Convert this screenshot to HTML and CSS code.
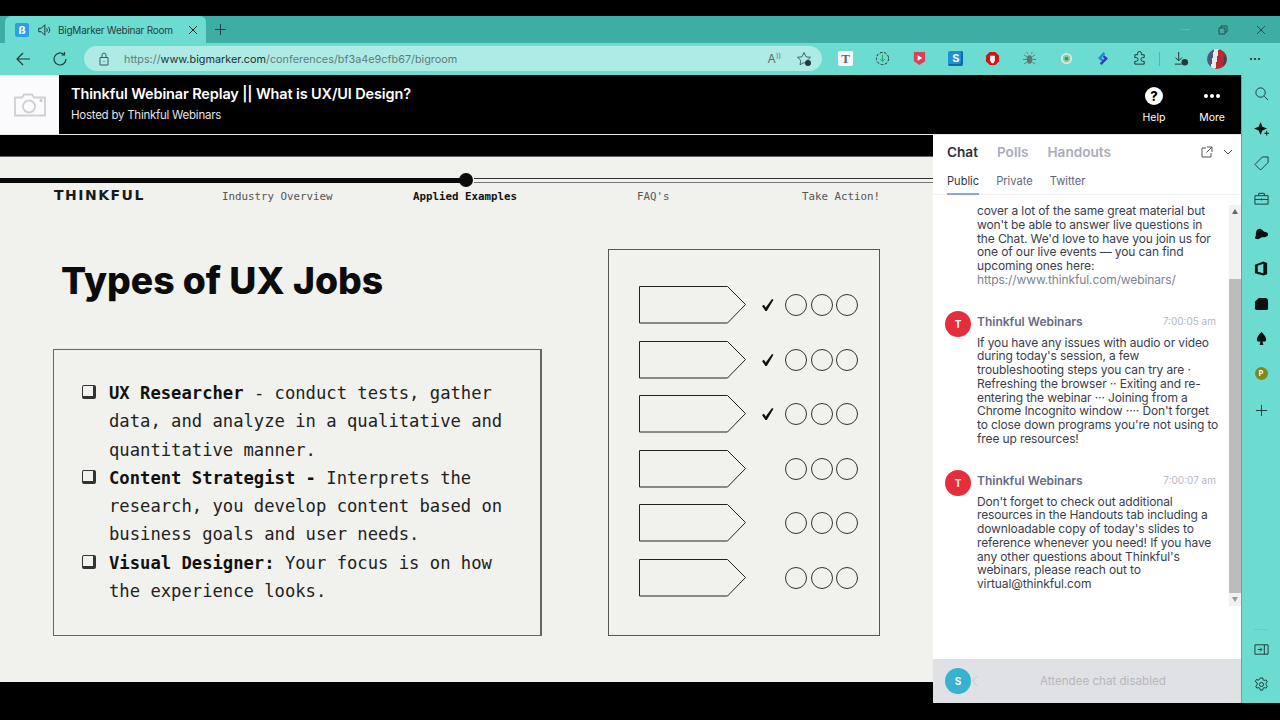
FILE: index.html
```html
<!DOCTYPE html>
<html lang="en">
<head>
  <meta charset="UTF-8" />
  <title>BigMarker Webinar Room</title>
  <link rel="stylesheet" href="styles.css">
</head>
<body>
  <div class="browser">
    <div class="tabstrip">
      <div class="tab">
        <span class="favicon">ß</span>
        <svg class="ic14" viewBox="0 0 16 16"><path d="M2 6h3l4-4v12l-4-4H2zM11 6c1 1 1 3 0 4M13 4.500c2 2 2 5 0 7"/></svg>
        <span class="tab-title">BigMarker Webinar Room</span>
        <svg class="ic10" viewBox="0 0 10 10"><path d="M1 1l8 8M9 1l-8 8"/></svg>
      </div>
      <svg class="newtab" viewBox="0 0 12 12"><path d="M6 0v12M0 6h12"/></svg>
      <div class="winctl">
        <span class="minimize"></span>
        <svg class="ic10" viewBox="0 0 10 10"><path d="M1 3h6v6H1zM3 3V1h6v6H7"/></svg>
        <svg class="ic10" viewBox="0 0 10 10"><path d="M1 1l8 8M9 1l-8 8"/></svg>
      </div>
    </div>
    <div class="toolbar">
      <svg class="nav-ic" viewBox="0 0 16 16"><path d="M15 8H2M8 2L2 8l6 6"/></svg>
      <svg class="nav-ic reload" viewBox="0 0 16 16"><path d="M14 8a6 6 0 1 1-2-4.500M12.500 1v3h-3"/></svg>
      <div class="addressbar">
        <svg class="ic14 lock" viewBox="0 0 14 14"><path d="M3 5.500h8V13H3zM5 5.500V3a2 2 0 0 1 4 0v2.500M7 9v1"/></svg>
        <span class="url">https://<b>www.bigmarker.com</b>/conferences/bf3a4e9cfb67/bigroom</span>
        <span class="addr-end">
          <span class="read-aloud">A<small>))</small></span>
          <svg class="ic16" viewBox="0 0 16 16"><path d="M8 1.500l2 4.300 4.500.5-3.300 3 .8 4.500L8 11.500l-4 2.300.8-4.500-3.300-3 4.500-.5z"/><circle class="fill-dark" cx="12" cy="12" r="3"/></svg>
        </span>
      </div>
      <div class="extensions">
        <span class="ext ext-t">T</span>
        <svg class="ext-svg" viewBox="0 0 16 16"><circle cx="8" cy="8" r="6.500" stroke-dasharray="3 1.500"/><path class="green" d="M8 4v7M5.500 8.500L8 11l2.500-2.500"/></svg>
        <svg class="ext-svg" viewBox="0 0 16 16"><path class="pocket" d="M2 1h12v10l-6 4-6-4z"/><path class="white-fill" d="M6 4.500l5 3-5 3z"/></svg>
        <span class="ext ext-s">S</span>
        <svg class="ext-svg" viewBox="0 0 16 16"><path class="stop" d="M5 1h6l4 4v6l-4 4H5l-4-4V5z"/><path class="white-fill" d="M5.500 5h5v5l-1.500 3H7l-1.500-3z"/></svg>
        <svg class="ext-svg" viewBox="0 0 16 16"><ellipse class="bug" cx="8" cy="9" rx="3" ry="4.500"/><path class="bug-legs" d="M5 6L2 4M5 9H1M5 12l-3 2M11 6l3-2M11 9h4M11 12l3 2M6 3L5 1M10 3l1-2"/></svg>
        <svg class="ext-svg" viewBox="0 0 16 16"><circle class="ring" cx="8" cy="8" r="5"/><circle class="ring-dot" cx="8" cy="8" r="2"/></svg>
        <svg class="ext-svg" viewBox="0 0 16 16"><path class="blue-stroke" d="M10 2L5 7.500l4 3"/><path class="purple-stroke" d="M9 5.500l3 2.500-6 6"/></svg>
        <svg class="ext-svg" viewBox="0 0 16 16"><path d="M6 2.500a2 2 0 0 1 4 0V4h3v3h-1.500a2 2 0 0 0 0 4H13v3H3v-3h1.500a2 2 0 0 0 0-4H3V4h3z"/></svg>
        <span class="tool-sep"></span>
        <svg class="ext-svg" viewBox="0 0 16 16"><path d="M5 1v9M1.500 7L5 10.500 8.500 7M1 14h7"/><circle class="fill-dark" cx="11.500" cy="12" r="3.500"/></svg>
        <span class="avatar-profile"></span>
        <span class="dots-dark">···</span>
      </div>
    </div>
  </div>

  <div class="app">
    <div class="app-main">
      <header class="topbar">
        <div class="logo-box">
          <svg class="camera" viewBox="0 0 32 24"><path d="M1 5h7l2-3h8l2 3h11v18H1z"/><circle cx="15" cy="14" r="6"/><circle cx="27" cy="8" r=".8"/></svg>
        </div>
        <div class="title-block">
          <div class="webinar-title">Thinkful Webinar Replay || What is UX/UI Design?</div>
          <div class="hosted">Hosted by Thinkful Webinars</div>
        </div>
        <div class="top-actions">
          <div class="top-action">
            <span class="help-ic">?</span>
            <span>Help</span>
          </div>
          <div class="top-action">
            <span class="more-ic"><i></i><i></i><i></i></span>
            <span>More</span>
          </div>
        </div>
      </header>

      <div class="room">
        <main class="stage">
          <section class="slide">
            <div class="progress">
              <span class="progress-done"></span>
              <span class="progress-dot"></span>
              <span class="progress-left"></span>
            </div>
            <nav class="slide-nav">
              <span class="brand">THINKFUL</span>
              <span class="nav-one">Industry Overview</span>
              <span class="nav-two">Applied Examples</span>
              <span class="nav-three">FAQ's</span>
              <span class="nav-four">Take Action!</span>
            </nav>
            <div class="slide-body">
              <div class="slide-left">
                <h1>Types of UX Jobs</h1>
                <ul class="jobs">
                  <li><b>UX Researcher</b> - conduct tests, gather<br>data, and analyze in a qualitative and<br>quantitative manner.</li>
                  <li><b>Content Strategist -</b> Interprets the<br>research, you develop content based on<br>business goals and user needs.</li>
                  <li><b>Visual Designer:</b> Your focus is on how<br>the experience looks.</li>
                </ul>
              </div>
              <div class="diagram">
                <div class="diagram-row">
                  <svg class="arrow" viewBox="0 0 108 38"><path d="M.5.500h88l18 18-18 18.500H.500z"/></svg>
                  <span class="check"><svg viewBox="0 0 12 12"><path d="M0 7l2-1.300 1.700 2.800L10 0l1.500.8L4.800 12H3.400z"/></svg></span>
                  <span class="dots"><i></i><i></i><i></i></span>
                </div>
                <div class="diagram-row">
                  <svg class="arrow" viewBox="0 0 108 38"><path d="M.5.500h88l18 18-18 18.500H.500z"/></svg>
                  <span class="check"><svg viewBox="0 0 12 12"><path d="M0 7l2-1.300 1.700 2.800L10 0l1.500.8L4.800 12H3.400z"/></svg></span>
                  <span class="dots"><i></i><i></i><i></i></span>
                </div>
                <div class="diagram-row">
                  <svg class="arrow" viewBox="0 0 108 38"><path d="M.5.500h88l18 18-18 18.500H.500z"/></svg>
                  <span class="check"><svg viewBox="0 0 12 12"><path d="M0 7l2-1.300 1.700 2.800L10 0l1.500.8L4.800 12H3.400z"/></svg></span>
                  <span class="dots"><i></i><i></i><i></i></span>
                </div>
                <div class="diagram-row">
                  <svg class="arrow" viewBox="0 0 108 38"><path d="M.5.500h88l18 18-18 18.500H.500z"/></svg>
                  <span class="check"></span>
                  <span class="dots"><i></i><i></i><i></i></span>
                </div>
                <div class="diagram-row">
                  <svg class="arrow" viewBox="0 0 108 38"><path d="M.5.500h88l18 18-18 18.500H.500z"/></svg>
                  <span class="check"></span>
                  <span class="dots"><i></i><i></i><i></i></span>
                </div>
                <div class="diagram-row">
                  <svg class="arrow" viewBox="0 0 108 38"><path d="M.5.500h88l18 18-18 18.500H.500z"/></svg>
                  <span class="check"></span>
                  <span class="dots"><i></i><i></i><i></i></span>
                </div>
              </div>
            </div>
          </section>
        </main>

        <aside class="chat">
          <div class="chat-tabs">
            <span class="chat-tab active">Chat</span>
            <span class="chat-tab">Polls</span>
            <span class="chat-tab">Handouts</span>
            <span class="chat-tools">
              <svg class="ic12" viewBox="0 0 12 12"><path d="M5 2H1v9h9V7M6 1h5v5M11 1L5.500 6.500"/></svg>
              <svg class="ic12" viewBox="0 0 12 12"><path d="M2 4l4 4 4-4"/></svg>
            </span>
          </div>
          <div class="chat-subtabs">
            <span class="subtab active">Public</span>
            <span class="subtab">Private</span>
            <span class="subtab">Twitter</span>
          </div>
          <div class="chat-scroll">
            <div class="messages">
              <div class="msg msg-cut">
                <p>cover a lot of the same great material but<br>won't be able to answer live questions in<br>the Chat. We'd love to have you join us for<br>one of our live events — you can find<br>upcoming ones here:<br><a>https://www.thinkful.com/webinars/</a></p>
              </div>
              <div class="msg">
                <span class="avatar">T</span>
                <div class="msg-body">
                  <div class="msg-head"><b>Thinkful Webinars</b><time>7:00:05 am</time></div>
                  <p>If you have any issues with audio or video<br>during today's session, a few<br>troubleshooting steps you can try are ·<br>Refreshing the browser ·· Exiting and re-<br>entering the webinar ··· Joining from a<br>Chrome Incognito window ···· Don't forget<br>to close down programs you're not using to<br>free up resources!</p>
                </div>
              </div>
              <div class="msg">
                <span class="avatar">T</span>
                <div class="msg-body">
                  <div class="msg-head"><b>Thinkful Webinars</b><time>7:00:07 am</time></div>
                  <p>Don't forget to check out additional<br>resources in the Handouts tab including a<br>downloadable copy of today's slides to<br>reference whenever you need! If you have<br>any other questions about Thinkful's<br>webinars, please reach out to<br>virtual@thinkful.com</p>
                </div>
              </div>
            </div>
            <div class="scrollbar">
              <span class="sb-arrow up"></span>
              <span class="sb-space"></span>
              <span class="sb-thumb"></span>
              <span class="sb-arrow down"></span>
            </div>
          </div>
          <div class="chat-input">
            <span class="avatar avatar-me">S</span>
            <svg class="chev-left" viewBox="0 0 6 12"><path d="M5 1L1 6l4 5"/></svg>
            <span class="disabled-note">Attendee chat disabled</span>
          </div>
        </aside>
      </div>
    </div>

    <aside class="sidebar">
      <svg class="side-ic" viewBox="0 0 16 16"><circle cx="7" cy="7" r="5"/><path d="M11 11l4 4"/></svg>
      <svg class="side-ic solid" viewBox="0 0 16 16"><path d="M7 1l2 5 5 2-5 2-2 5-2-5-5-2 5-2zM13 10.500h1v2h2v1h-2v2h-1v-2h-2v-1h2z"/></svg>
      <svg class="side-ic" viewBox="0 0 16 16"><path d="M1 9l8-8h6v6l-8 8zM11.500 4.500h.01"/></svg>
      <svg class="side-ic" viewBox="0 0 16 16"><path d="M1 5h14v9H1zM5 5V2.500h6V5M1 9h14M8 8v2"/></svg>
      <svg class="side-ic solid" viewBox="0 0 16 16"><path d="M1 12c1-1 1-2 1-3 0-3 1-6 4-6 2 0 3 2 5 3 2 0 4 1 4 3s-3 3-6 3c-2 0-3 2-5 2-1 0-3 0-3-2z"/></svg>
      <svg class="side-ic solid" viewBox="0 0 16 16"><path d="M1 4l9-3.500 4 1.500v12l-4 1.500-9-2.500zM4 5v6.500l6 1.500V3z"/></svg>
      <svg class="side-ic solid" viewBox="0 0 16 16"><path d="M5 2h8l2 2v10l-1 1H3l-2-1V6z"/></svg>
      <svg class="side-ic solid" viewBox="0 0 16 16"><path d="M8 1c2 2 5 5 5 8 0 2-2 3-4 2l1 4H6l1-4c-2 1-4 0-4-2 0-3 3-6 5-8z"/></svg>
      <span class="side-p">P</span>
      <svg class="side-ic side-plus" viewBox="0 0 16 16"><path d="M8 2v12M2 8h12"/></svg>
      <span class="side-space"></span>
      <span class="side-rule"></span>
      <svg class="side-ic" viewBox="0 0 16 16"><path d="M1 3h14v10H1zM11 3v10M4 8h4M6.500 6L8.500 8l-2 2"/></svg>
      <svg class="side-ic gear" viewBox="0 0 16 16"><circle cx="8" cy="8" r="2.200"/><path d="M6.700 1h2.600l.4 2 1.200.7 2-.6 1.300 2.200-1.500 1.400v1.600l1.500 1.400-1.300 2.200-2-.6-1.200.7-.4 2H6.700l-.4-2-1.200-.7-2 .6-1.300-2.200 1.500-1.400V6.300L1.300 4.900l1.300-2.200 2 .6 1.200-.7z"/></svg>
    </aside>
  </div>
</body>
</html>
```

FILE: styles.css
```css
* {
  box-sizing: border-box;
}

html, body {
  margin: 0;
  height: 720px;
  overflow: hidden;
  background: #000;
  font-family: Inter, "Noto Sans", sans-serif;
}

svg {
  display: block;
  fill: none;
  stroke: #222;
  stroke-width: 1;
  flex: none;
}

p {
  margin: 0;
}

.ic10 { width: 10px; height: 10px; }
.ic12 { width: 12px; height: 12px; stroke: #555; }
.ic14 { width: 14px; height: 14px; }
.ic16 { width: 16px; height: 16px; }

/* browser chrome */
.browser {
  margin-top: 16px;
}

.tabstrip {
  height: 27px;
  background: #3eada4;
  display: flex;
  align-items: flex-end;
  padding-left: 5px;
}

.tab {
  width: 201px;
  height: 27px;
  background: #6cdcd1;
  border-radius: 6px 6px 0 0;
  display: flex;
  align-items: center;
  padding: 0 8px 0 10px;
  gap: 7.500px;
}

.favicon {
  width: 14px;
  height: 14px;
  background: #2b9fe6;
  color: #fff;
  font-size: 11px;
  font-weight: 700;
  line-height: 14px;
  text-align: center;
  border-radius: 2px;
  flex: none;
}

.tab-title {
  font-size: 10px;
  letter-spacing: -.25px;
  color: #24403d;
  white-space: nowrap;
  flex: 1;
}

.newtab {
  width: 11px;
  height: 11px;
  margin: 0 0 8px 9px;
  stroke: #234;
}

.winctl {
  margin-left: auto;
  height: 27px;
  display: flex;
  align-items: center;
  gap: 28px;
  padding-right: 14px;
}

.winctl svg {
  stroke: #27504c;
}

.minimize {
  width: 10px;
  height: 1px;
  background: #63b9b1;
}

.toolbar {
  height: 32px;
  background: #6cdcd1;
  display: flex;
  align-items: center;
  padding: 0 0 1px 15px;
}

.nav-ic {
  width: 16px;
  height: 16px;
  stroke: #1f3b38;
  stroke-width: 1.200;
}

.reload {
  margin-left: 21px;
}

.addressbar {
  width: 738px;
  height: 25px;
  margin-left: 16px;
  border-radius: 13px;
  background: #aeebe4;
  display: flex;
  align-items: center;
  padding: 0 10px 0 13px;
}

.lock {
  stroke: #3d5f5b;
}

.url {
  margin-left: 13px;
  font-size: 10.850px;
  color: #5d7d7a;
  white-space: nowrap;
}

.url b {
  font-weight: 400;
  color: #1b2f2d;
}

.addr-end {
  margin-left: auto;
  display: flex;
  align-items: center;
  gap: 15px;
}

.addr-end svg {
  stroke: #446663;
}

.read-aloud {
  font-size: 12px;
  color: #56706e;
}

.read-aloud small {
  font-size: 7px;
  vertical-align: top;
}

.fill-dark {
  fill: #253a38;
  stroke: none;
}

.extensions {
  display: flex;
  align-items: center;
  margin-left: 16px;
  gap: 21.750px;
}

.ext-svg {
  width: 15px;
  height: 15px;
  stroke: #1e2e2c;
}

.ext {
  width: 15px;
  height: 15px;
  font-size: 11px;
  font-weight: 700;
  line-height: 15px;
  text-align: center;
  border-radius: 2px;
}

.ext-t {
  background: #f4f8f8;
  color: #666;
  font-family: "Liberation Serif", serif;
  font-size: 13px;
}

.ext-s {
  background: #1f8fd6;
  color: #fff;
  box-shadow: inset -2px -2px 0 #1567a6;
}

.green { stroke: #2e9a55; }
.pocket { fill: #d9405a; stroke: none; }
.stop { fill: #d81010; stroke: none; }
.white-fill { fill: #fff; stroke: none; }
.bug { fill: #5d7775; stroke: none; }
.bug-legs { stroke: #5d7775; }
.ring { stroke: #d7ecdc; stroke-width: 2; fill: #8cc9a4; }
.ring-dot { fill: #3d9a67; stroke: none; }
.blue-stroke { stroke: #1f86e0; stroke-width: 2.500; }
.purple-stroke { stroke: #3a35c0; stroke-width: 2.500; }

.tool-sep {
  width: 1px;
  height: 14px;
  background: #57b3aa;
  margin: 0 -8px 0 -10px;
}

.avatar-profile {
  width: 20px;
  height: 20px;
  margin-left: -3px;
  border-radius: 50%;
  background: linear-gradient(100deg, #4b5a80 0 30%, #e8e8ee 30% 50%, #b42a35 50% 80%, #5a3a4a 80%);
}

.dots-dark {
  color: #20302e;
  font-size: 12px;
  font-weight: 700;
}

/* app frame */
.app {
  display: flex;
  height: 628px;
}

.app-main {
  width: 1241px;
  display: flex;
  flex-direction: column;
}

.topbar {
  height: 60px;
  background: #000;
  border-bottom: 1px solid #e6e6e6;
  display: flex;
  color: #fff;
}

.logo-box {
  width: 59px;
  height: 59px;
  background: #fbfbfe;
  display: flex;
  align-items: center;
  justify-content: center;
}

.camera {
  width: 32px;
  height: 25px;
  stroke: #cfd0d4;
  stroke-width: 1.800;
}

.title-block {
  margin-left: 12px;
  padding-top: 10px;
}

.webinar-title {
  font-size: 14.500px;
  font-weight: 600;
  line-height: 18px;
  letter-spacing: -.13px;
}

.hosted {
  margin-top: 5px;
  font-size: 11.500px;
  line-height: 15px;
  color: #e4e4e4;
  letter-spacing: -.25px;
}

.top-actions {
  margin-left: auto;
  display: flex;
}

.top-action {
  width: 58px;
  display: flex;
  flex-direction: column;
  align-items: center;
  padding-top: 12px;
  gap: 6px;
  font-size: 10.500px;
  line-height: 14px;
}

.help-ic {
  width: 18px;
  height: 18px;
  border-radius: 50%;
  background: #fff;
  color: #000;
  font-size: 13px;
  font-weight: 800;
  line-height: 18px;
  text-align: center;
}

.more-ic {
  height: 18px;
  display: flex;
  align-items: center;
  gap: 2px;
}

.more-ic i {
  width: 4px;
  height: 4px;
  border-radius: 50%;
  background: #fff;
}

.room {
  flex: 1;
  display: flex;
  min-height: 0;
}

/* slide */
.stage {
  width: 933px;
  background: #000;
  padding-top: 21px;
}

.slide {
  height: 526px;
  background: #f1f1ee;
  border-top: 1px solid #666;
  display: flex;
  flex-direction: column;
}

.progress {
  margin-top: 16px;
  height: 14px;
  display: flex;
  align-items: center;
}

.progress-done {
  width: 460px;
  height: 5px;
  background: #0a0a0a;
}

.progress-dot {
  width: 14px;
  height: 14px;
  border-radius: 50%;
  background: #0a0a0a;
  margin-left: -1px;
}

.progress-left {
  flex: 1;
  margin-left: 1px;
  height: 5px;
  border-top: 1px solid #333;
  border-bottom: 1px solid #777;
}

.slide-nav {
  display: grid;
  grid-template-columns: 168px 191px 224px 165px auto;
  padding-left: 54px;
  height: 26px;
  align-items: center;
  font-family: "DejaVu Sans Mono", monospace;
  font-size: 10.800px;
  color: #555;
  margin-top: -4px;
}

.brand {
  font-family: "DejaVu Sans", sans-serif;
  font-size: 14px;
  font-weight: 700;
  color: #1a1a1a;
  letter-spacing: 1.500px;
  transform: translateY(-1px);
}

.nav-two {
  color: #111;
  font-weight: 700;
}

.slide-body {
  display: flex;
  flex: 1;
  padding-left: 53px;
}

.slide-left {
  width: 489px;
  display: flex;
  flex-direction: column;
}

h1 {
  margin: 50px 0 0 8px;
  height: 90px;
  font-size: 37.300px;
  line-height: 44px;
  font-weight: 800;
  color: #0c0c0c;
}

.jobs {
  list-style: none;
  margin: 0;
  height: 287px;
  border: 1px solid #666;
  border-right-width: 2px;
  padding: 29px 0 0 55px;
  font-family: "DejaVu Sans Mono", monospace;
  font-size: 17.200px;
  line-height: 28.250px;
  color: #222;
  white-space: nowrap;
}

.jobs li {
  position: relative;
}

.jobs li::before {
  content: "";
  box-sizing: border-box;
  position: absolute;
  left: -27px;
  top: 6px;
  width: 14px;
  height: 14px;
  border: 1px solid #333;
  border-right-width: 3px;
  border-bottom-width: 3px;
  border-radius: 2px;
}

.jobs b {
  color: #111;
}

.diagram {
  width: 272px;
  height: 387px;
  margin: 40px 0 0 66px;
  border: 1px solid #555;
  padding: 36px 0 0 30px;
  display: flex;
  flex-direction: column;
  gap: 16.500px;
}

.diagram-row {
  display: flex;
  align-items: center;
  height: 38px;
}

.arrow {
  width: 108px;
  height: 38px;
  stroke: #222;
}

.check {
  width: 38px;
  display: flex;
  justify-content: center;
  padding-left: 3px;
}

.check svg {
  width: 12px;
  height: 12px;
  fill: #111;
  stroke: none;
}

.dots {
  display: flex;
  gap: 3.500px;
}

.dots i {
  width: 22px;
  height: 22px;
  border: 1px solid #333;
  border-radius: 50%;
}

/* chat panel */
.chat {
  width: 308px;
  background: #fff;
  display: flex;
  flex-direction: column;
}

.chat-tabs {
  height: 33px;
  display: flex;
  align-items: center;
  gap: 19px;
  padding: 0 7px 0 14px;
}

.chat-tab {
  font-size: 13.600px;
  font-weight: 600;
  color: #a9acba;
}

.chat-tab.active {
  color: #2d2f3e;
}

.chat-tools {
  margin-left: auto;
  display: flex;
  gap: 9px;
}

.chat-subtabs {
  height: 27px;
  display: flex;
  gap: 17px;
  padding: 1px 0 0 14px;
  border-bottom: 1px solid #f0f0f2;
  font-size: 11.100px;
}

.subtab {
  line-height: 24px;
  color: #5f6478;
}

.subtab.active {
  color: #33384c;
  border-bottom: 2px solid #8ea6d6;
  height: 26px;
}

.chat-scroll {
  margin-top: 10px;
  flex: 1;
  display: flex;
  align-items: flex-start;
}

.messages {
  width: 296px;
  padding: 0 13px 0 12px;
}

.msg {
  display: flex;
  gap: 6px;
  margin-bottom: 24px;
}

.msg-cut {
  margin-top: -1px;
  padding-left: 32px;
  margin-bottom: 24px;
}

.msg p {
  font-size: 12px;
  line-height: 13.750px;
  color: #3a3d4c;
  white-space: nowrap;
  letter-spacing: -.12px;
}

.msg a {
  color: #7d8390;
}

.avatar {
  width: 26px;
  height: 26px;
  border-radius: 50%;
  background: #e52d3c;
  color: #fff;
  font-size: 10px;
  font-weight: 700;
  line-height: 26px;
  text-align: center;
  flex: none;
}

.msg-body {
  flex: 1;
  min-width: 0;
}

.msg-head {
  display: flex;
  justify-content: space-between;
  align-items: center;
  height: 21px;
  margin-bottom: 4px;
}

.msg-head b {
  font-size: 12px;
  font-weight: 600;
  color: #666b84;
}

.msg-head time {
  font-size: 10px;
  color: #b5b7be;
}

.scrollbar {
  width: 12px;
  height: 401px;
  background: #f1f1f1;
  display: flex;
  flex-direction: column;
}

.sb-space {
  height: 62px;
}

.sb-thumb {
  height: 314px;
  background: #bcbcbc;
}

.sb-arrow {
  height: 12px;
  display: flex;
  justify-content: center;
  align-items: center;
}

.sb-arrow::before {
  content: "";
  border-left: 3.500px solid transparent;
  border-right: 3.500px solid transparent;
}

.sb-arrow.up::before {
  border-bottom: 5px solid #666;
}

.sb-arrow.down::before {
  border-top: 5px solid #999;
}

.chat-input {
  height: 44px;
  background: #e0e1e4;
  display: flex;
  align-items: center;
  padding-left: 12px;
}

.avatar-me {
  background: #36b3d1;
}

.chev-left {
  width: 6px;
  height: 12px;
  margin-left: 1px;
  stroke: #c9cbd0;
}

.disabled-note {
  margin-left: 62px;
  font-size: 11.600px;
  color: #b5b7bc;
}

/* right edge sidebar */
.sidebar {
  width: 39px;
  background: #6cdcd1;
  border-left: 1px solid #5fa8a2;
  display: flex;
  flex-direction: column;
  align-items: center;
  padding-top: 11px;
  gap: 20px;
}

.side-ic {
  width: 15px;
  height: 15px;
  stroke: #1d3533;
}

.side-ic.solid {
  fill: #071211;
  stroke: none;
}

.side-p {
  width: 13px;
  height: 13px;
  margin: 1px 0;
  border-radius: 50%;
  background: #7d8a1e;
  color: #fff;
  font-size: 7px;
  font-weight: 700;
  line-height: 13px;
  text-align: center;
}

.side-plus {
  margin-top: 2px;
}

.side-space {
  flex: 1;
}

.side-rule {
  width: 14px;
  height: 1px;
  background: #62cfc4;
  margin-bottom: -8px;
}

.gear {
  margin-bottom: 11px;
}
```
